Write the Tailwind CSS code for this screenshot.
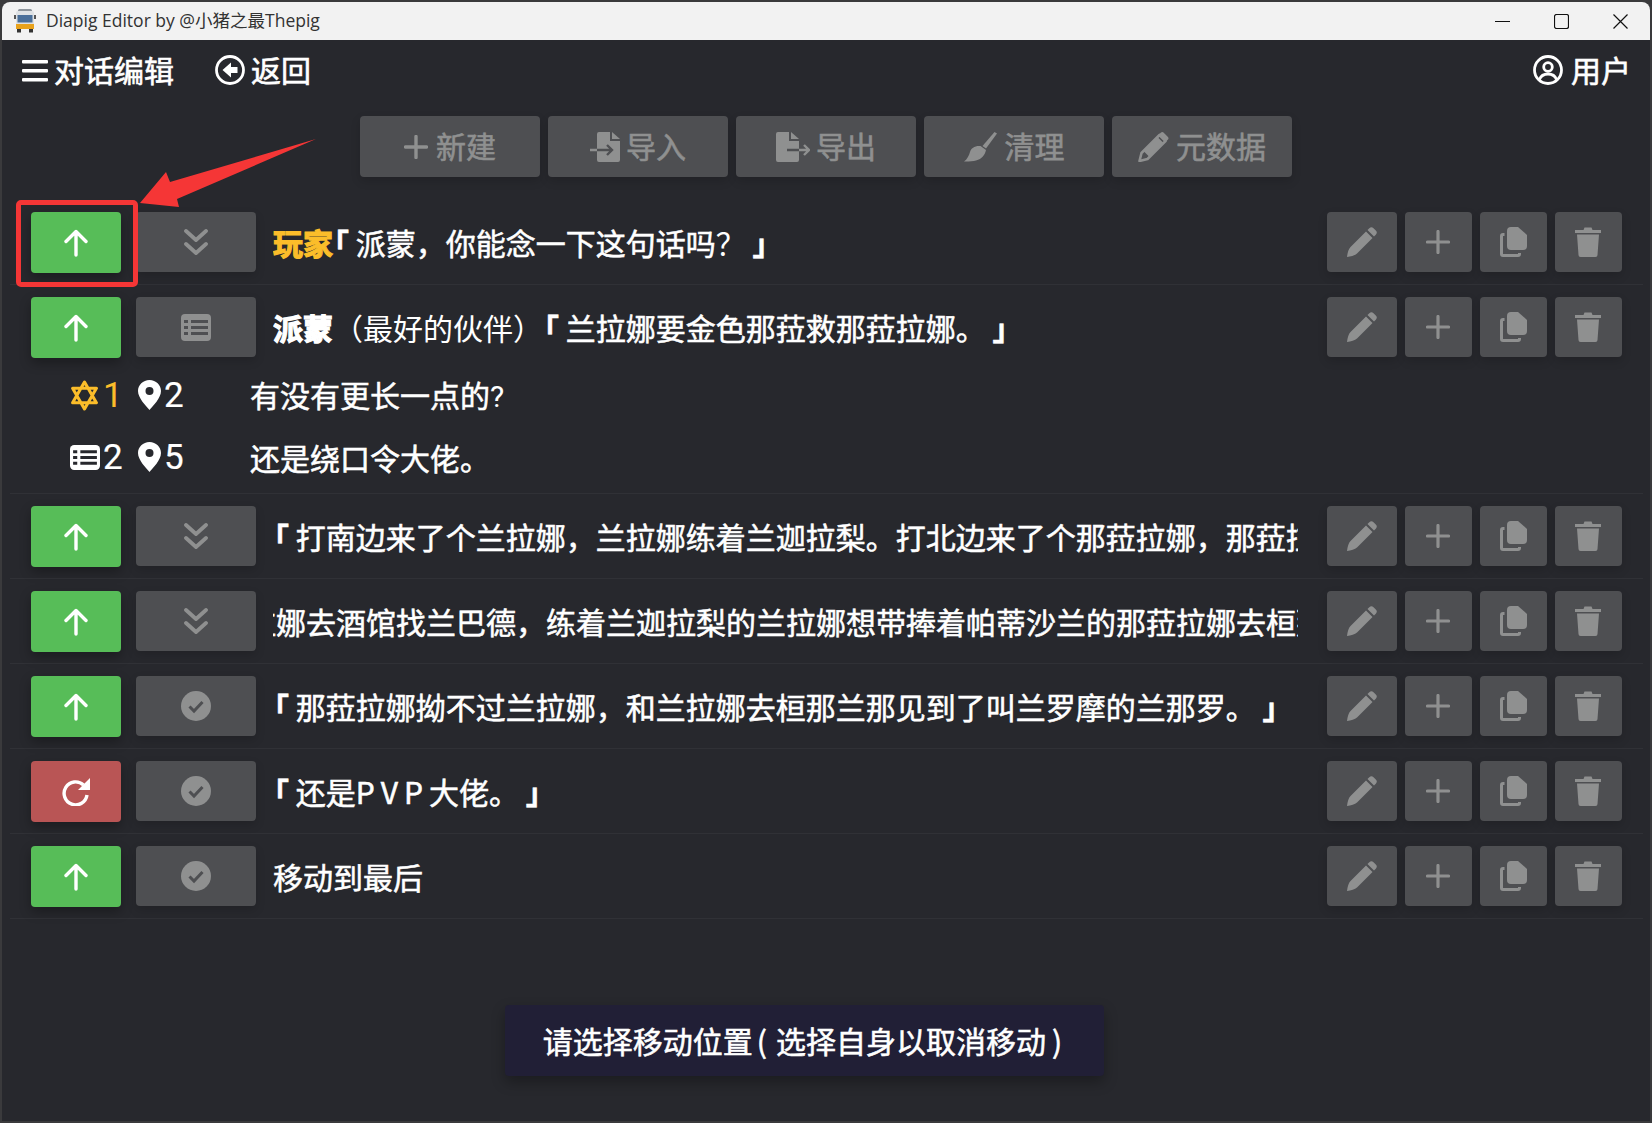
<!DOCTYPE html>
<html lang="zh-CN">
<head>
  <meta charset="UTF-8">
  <title>Diapig Editor</title>
  <script src="https://cdn.jsdelivr.net/npm/@tailwindcss/browser@4"></script>
</head>
<body class="bg-[#3a3a3c] h-[1123px] w-[1652px] overflow-hidden font-['Noto_Sans_CJK_SC','Noto_Sans',sans-serif]">
  <div class="relative ml-[2px] mt-[2px] w-[1648px] h-[1119px] bg-[#27282d] rounded-t-[8px] overflow-hidden text-white">

    <!-- Title bar -->
    <div class="h-[38px] bg-[#f2f2f2] flex items-center pl-[12px] text-[#333] font-['Open_Sans','Noto_Sans_CJK_SC',sans-serif] text-[17.5px]">
      <svg class="w-[22px] h-[24px]" viewBox="0 0 22 24">
        <rect x="4" y="0" width="14" height="3" rx="1.5" fill="#8d949b"/>
        <rect x="2" y="2" width="18" height="18" rx="2" fill="#dfe2e5"/>
        <rect x="3.500" y="6" width="15" height="7.500" fill="#4a6f9a"/>
        <rect x="2" y="15" width="18" height="5" fill="#e8a21c"/>
        <rect x="3" y="20" width="4" height="3.500" fill="#333"/>
        <rect x="15" y="20" width="4" height="3.500" fill="#333"/>
        <rect x="0" y="6" width="2" height="4" fill="#555"/>
        <rect x="20" y="6" width="2" height="4" fill="#555"/>
      </svg>
      <span class="ml-[10px] -mt-[2px]">Diapig Editor by @小猪之最Thepig</span>
      <div class="ml-auto flex items-center gap-[44px] pr-[22px]">
        <svg class="w-[15px] h-[15px]" viewBox="0 0 15 15"><path d="M0 7.500h15" stroke="#111" stroke-width="1"/></svg>
        <svg class="w-[15px] h-[15px]" viewBox="0 0 15 15"><rect x=".5" y=".5" width="14" height="14" rx="2" fill="none" stroke="#111" stroke-width="1.200"/></svg>
        <svg class="w-[15px] h-[15px]" viewBox="0 0 15 15"><path d="M.5.5l14 14M14.500.5l-14 14" stroke="#111" stroke-width="1.200"/></svg>
      </div>
    </div>

    <!-- Header -->
    <div class="h-[60px] flex items-center pl-[20px] pr-[19px] text-[30px] [-webkit-text-stroke-width:0.6px]">
      <svg class="w-[26px] h-[24px] mt-[1px]" viewBox="0 0 26 24" fill="#fff"><rect y="1" width="26" height="3.500" rx="1"/><rect y="10" width="26" height="3.500" rx="1"/><rect y="19" width="26" height="3.500" rx="1"/></svg>
      <span class="ml-[6px] -mt-[2px]">对话编辑</span>
      <svg class="ml-[41px] w-[30px] h-[30px]" viewBox="0 0 30 30"><circle cx="15" cy="15" r="13.500" fill="none" stroke="#fff" stroke-width="2.800"/><path d="M16 7.500v4.500h6.500v6H16v4.500L7.500 15z" fill="#fff"/></svg>
      <span class="ml-[6px] -mt-[2px]">返回</span>
      <svg class="ml-auto w-[30px] h-[30px]" viewBox="0 0 30 30" fill="none" stroke="#fff" stroke-width="2.800"><circle cx="15" cy="15" r="13.500"/><circle cx="15" cy="12" r="4.300"/><path d="M6.500 24.500c1.500-4 4.500-5.500 8.500-5.500s7 1.500 8.500 5.500"/></svg>
      <span class="ml-[8px] -mt-[2px]">用户</span>
    </div>

    <!-- Toolbar -->
    <div class="pl-[358px] pt-[16px] flex gap-[8px] text-[30px] text-[#8f9090] [-webkit-text-stroke-width:0.6px]">
      <button class="w-[180px] h-[61px] rounded-[4px] bg-[#4e4f52] shadow-[0_4px_10px_rgba(0,0,0,.15)] flex items-center justify-center gap-[8px]">
        <svg class="w-[24px] h-[24px]" viewBox="0 0 24 24"><path d="M12 1.500v21M1.500 12h21" stroke="#8f9090" stroke-width="3.400" stroke-linecap="round"/></svg>
        <span class="-mt-[2px]">新建</span>
      </button>
      <button class="w-[180px] h-[61px] rounded-[4px] bg-[#4e4f52] shadow-[0_4px_10px_rgba(0,0,0,.15)] flex items-center justify-center gap-[6px]">
        <svg class="w-[30px] h-[30px]" viewBox="0 0 30 30"><path d="M9 0h11v9h10v19a2 2 0 0 1-2 2H9a2 2 0 0 1-2-2V2a2 2 0 0 1 2-2z" fill="#8f9090"/><path d="M22 0l8 7h-8z" fill="#8f9090"/><path d="M0 18h7" stroke="#8f9090" stroke-width="2.400"/><path d="M7 18h15M17 13l5 5-5 5" stroke="#4e4f52" stroke-width="2.400" fill="none"/></svg>
        <span class="-mt-[2px]">导入</span>
      </button>
      <button class="w-[180px] h-[61px] rounded-[4px] bg-[#4e4f52] shadow-[0_4px_10px_rgba(0,0,0,.15)] flex items-center justify-center gap-[6px]">
        <svg class="w-[34px] h-[30px]" viewBox="0 0 34 30"><path d="M2 0h11v9h10v19a2 2 0 0 1-2 2H2a2 2 0 0 1-2-2V2a2 2 0 0 1 2-2z" fill="#8f9090"/><path d="M15 0l8 7h-8z" fill="#8f9090"/><path d="M11 18h12" stroke="#4e4f52" stroke-width="2.400"/><path d="M23 18h10M28 13l5 5-5 5" stroke="#8f9090" stroke-width="2.400" fill="none"/></svg>
        <span class="-mt-[2px]">导出</span>
      </button>
      <button class="w-[180px] h-[61px] rounded-[4px] bg-[#4e4f52] shadow-[0_4px_10px_rgba(0,0,0,.15)] flex items-center justify-center gap-[8px]">
        <svg class="w-[33px] h-[30px]" viewBox="0 0 33 30" fill="#8f9090"><path d="M30.500 0l2.500 1.500-11 15-3.500-2.500z"/><path d="M16.500 14l5.500 4c-1 5-4 9-10 10.500-3 .7-8 1.200-12 1 3-2 5-6 6-9.500 1-4 5-6.500 10.500-6z"/></svg>
        <span class="-mt-[2px]">清理</span>
      </button>
      <button class="w-[180px] h-[61px] rounded-[4px] bg-[#4e4f52] shadow-[0_4px_10px_rgba(0,0,0,.15)] flex items-center justify-center gap-[7px]">
        <svg class="w-[31px] h-[30px]" viewBox="0 0 30 30"><path d="M21 3l6 6L9 27l-8 2 2-8z" fill="none" stroke="#8f9090" stroke-width="2.600" stroke-linejoin="round"/><path d="M20.500 2.500l2-2a2 2 0 0 1 2.500 0l4.500 4.500a2 2 0 0 1 0 2.500l-2 2zM5 19L19 5l6 6L11 25z" fill="#8f9090"/></svg>
        <span class="-mt-[2px]">元数据</span>
      </button>
    </div>

    <!-- Rows, rendered below -->
    <div class="ml-[8px] mr-[7px] mt-[23px]" id="rows"></div>

    <!-- Toast -->
    <div class="absolute left-[503px] top-[1003px] w-[599px] h-[71px] pr-[4px] rounded-[4px] bg-[#211f36] shadow-[0_6px_14px_rgba(0,0,0,.3)] flex items-center justify-center text-[30px] [-webkit-text-stroke-width:0.55px] whitespace-nowrap">请选择移动位置<span class="ml-[4px] mr-[9px]">(</span>选择自身以取消移动<span class="ml-[6px]">)</span></div>

    <!-- Red annotation -->
    <div class="absolute left-[14px] top-[198px] w-[122px] h-[87px] border-[5px] border-[#f53636] rounded-[5px]"></div>
    <svg class="absolute left-[138px] top-[136px]" width="180" height="74" viewBox="0 0 180 74"><path d="M176 1 L30 44 L26 34 L0 65 L39 69 L37 61z" fill="#f53636"/></svg>
  </div>

  <script>
    const arrowUp = `<svg class="w-[24px] h-[28px]" viewBox="0 0 24 28" fill="none" stroke="#fff" stroke-width="3.400" stroke-linecap="round" stroke-linejoin="round"><path d="M12 26V3M2 12.500 12 2.500l10 10"/></svg>`;
    const redo = `<svg class="w-[28px] h-[28px]" viewBox="0 0 28 28"><path d="M21.500 7A11.500 11.500 0 1 0 25 17" fill="none" stroke="#fff" stroke-width="3.400"/><path d="M28 0v12H16z" fill="#fff"/></svg>`;
    const chevrons = `<svg class="w-[24px] h-[26px]" viewBox="0 0 24 26" fill="none" stroke="#8f9090" stroke-width="3.800" stroke-linecap="round" stroke-linejoin="round"><path d="M2 2l10 9 10-9M2 15l10 9 10-9"/></svg>`;
    const listIcon = `<svg class="w-[30px] h-[27px]" viewBox="0 0 30 27"><rect width="30" height="27" rx="4" fill="#8f9090"/><path d="M3 6h4v3H3zM3 12h4v3H3zM3 18h4v3H3zM10 6h17v3H10zM10 12h17v3H10zM10 18h17v3H10z" fill="#4e4f52"/></svg>`;
    const checkIcon = `<svg class="w-[30px] h-[30px]" viewBox="0 0 30 30"><circle cx="15" cy="15" r="15" fill="#8f9090"/><path d="M8.500 15.500l4.500 4.500 8.500-9" fill="none" stroke="#4e4f52" stroke-width="3"/></svg>`;
    const pin = `<svg class="w-[23px] h-[30px] ml-[1px]" viewBox="0 0 23 30"><path d="M11.500 0C5 0 0 5 0 11c0 7 8 15 11.500 19 3.500-4 11.500-12 11.500-19 0-6-5-11-11.500-11z" fill="#fff"/><circle cx="11.500" cy="11" r="4" fill="#27282d"/></svg>`;
    const star = `<svg class="w-[29px] h-[31px]" viewBox="0 0 28 30" fill="none" stroke="#fbbd2a" stroke-width="3" stroke-linejoin="round"><path d="M14 2l11.500 20h-23zM14 28L25.500 8h-23z"/></svg>`;
    const tableWhite = `<svg class="w-[30px] h-[25px]" viewBox="0 0 29 24"><rect width="29" height="24" rx="4" fill="#fff"/><path d="M3 5h4v3H3zM3 10.500h4v3H3zM3 16h4v3H3zM10 5h16v3H10zM10 10.500h16v3H10zM10 16h16v3H10z" fill="#27282d"/></svg>`;

    const btnGrey = "rounded-[4px] bg-[#4e4f52] shadow-[0_4px_10px_rgba(0,0,0,.15)] flex items-center justify-center";
    const actions = `
      <div class="flex gap-[8px] shrink-0 ml-[15px]">
        <button class="w-[70px] h-[60px] ${btnGrey}"><svg class="w-[30px] h-[30px]" viewBox="0 0 30 30" fill="#8f9090"><path d="M20.500 3l1.800-1.800a3 3 0 0 1 4.200 0l2.300 2.300a3 3 0 0 1 0 4.200L27 9.500zM19 4.500l6.500 6.500L10 26.500c-2 2-6 3-10 3.500.5-4 1.500-8 3.500-10z"/></svg></button>
        <button class="w-[67px] h-[60px] ${btnGrey}"><svg class="w-[24px] h-[24px] -ml-[1px]" viewBox="0 0 24 24"><path d="M12 1.500v21M1.500 12h21" stroke="#8f9090" stroke-width="3.200" stroke-linecap="round"/></svg></button>
        <button class="w-[67px] h-[60px] ${btnGrey}"><svg class="w-[27px] h-[30px]" viewBox="0 0 27 30"><path d="M4.500 7.500H3A1.500 1.500 0 0 0 1.500 9v18A1.500 1.500 0 0 0 3 28.500h15a1.500 1.500 0 0 0 1.500-1.500v-1" fill="none" stroke="#8f9090" stroke-width="3"/><path d="M7 4a4 4 0 0 1 4-4h7l9 8v11a4 4 0 0 1-4 4H11a4 4 0 0 1-4-4z" fill="#8f9090"/></svg></button>
        <button class="w-[67px] h-[60px] ${btnGrey}"><svg class="w-[26px] h-[30px] -ml-[1px]" viewBox="0 0 26 30" fill="#8f9090"><path d="M0 3h8.500l1-2.500h7l1 2.500H26v3H0z"/><path d="M2 7.500h22l-1.500 20.500a2 2 0 0 1-2 2h-15a2 2 0 0 1-2-2z"/></svg></button>
      </div>`;

    // left bracket glyph sits in the right half of its em box, pull it back
    const L = `<span class="inline-block -ml-[14px] font-bold">「</span> `;
    const R = ` <span class="font-bold">」</span>`;
    const thin = "[-webkit-text-stroke-width:0] font-normal";

    const rows = [
      { icon: chevrons, text: `<span class="font-bold text-[#fbbd2a] [-webkit-text-stroke-width:1.200px]">玩家</span>${L}派蒙，你能念一下这句话吗<span class="${thin}">？</span>${R}` },
      { icon: listIcon, text: `<span class="font-bold [-webkit-text-stroke-width:1.200px]">派蒙</span><span class="${thin}">（最好的伙伴）</span>${L}兰拉娜要金色那菈救那菈拉娜。${R}`, subs: true },
      { icon: chevrons, text: `${L}打南边来了个兰拉娜，兰拉娜练着兰迦拉梨。打北边来了个那菈拉娜，那菈拉娜捧着帕蒂沙兰。` },
      { icon: chevrons, text: `<span class="inline-block -ml-[27px]">拉娜去酒馆找兰巴德，练着兰迦拉梨的兰拉娜想带捧着帕蒂沙兰的那菈拉娜去桓那兰那。</span>` },
      { icon: checkIcon, text: `${L}那菈拉娜拗不过兰拉娜，和兰拉娜去桓那兰那见到了叫兰罗摩的兰那罗。${R}` },
      { icon: checkIcon, text: `${L}还是<span class="tracking-[6px]">PVP</span>大佬。${R}`, red: true },
      { icon: checkIcon, text: `移动到最后` },
    ];

    const subRows = `
      <div class="-mb-[6px] mt-[6px] text-[30px]">
        <div class="h-[62px] flex items-center pl-[60px]">
          <div class="w-[67px] flex items-center text-[35px] text-[#fbbd2a] font-['Roboto'] [-webkit-text-stroke-width:0]">${star}<span class="ml-[4px] mt-[3px]">1</span></div>
          <div class="w-[113px] flex items-center text-[35px] font-['Roboto'] [-webkit-text-stroke-width:0.2px]">${pin}<span class="ml-[3px] mt-[3px]">2</span></div>
          <div>有没有更长一点的<span class="font-['Roboto'] ${thin}">?</span></div>
        </div>
        <div class="h-[62px] flex items-center pl-[60px]">
          <div class="w-[67px] flex items-center text-[35px] font-['Roboto'] [-webkit-text-stroke-width:0.2px]">${tableWhite}<span class="ml-[3px] mt-[3px]">2</span></div>
          <div class="w-[113px] flex items-center text-[35px] font-['Roboto'] [-webkit-text-stroke-width:0.2px]">${pin}<span class="ml-[3px] mt-[3px]">5</span></div>
          <div>还是绕口令大佬。</div>
        </div>
      </div>`;

    document.getElementById("rows").innerHTML = rows.map(r => `
      <div class="border-b border-[#303136] pt-[12px] pb-[11px] [-webkit-text-stroke-width:0.55px]">
        <div class="flex items-start pl-[21px] pr-[21px]">
          <button class="w-[90px] h-[61px] shrink-0 rounded-[4px] ${r.red ? "bg-[#b95555]" : "bg-[#57bd58]"} shadow-[0_5px_12px_rgba(0,0,0,.3)] flex items-center justify-center">${r.red ? redo : arrowUp}</button>
          <button class="w-[120px] h-[60px] shrink-0 ml-[15px] ${btnGrey}">${r.icon}</button>
          <div class="flex-1 min-w-0 ml-[17px] mr-[14px] overflow-hidden whitespace-nowrap text-[30px] leading-[61px]">${r.text}</div>
          ${actions}
        </div>
        ${r.subs ? subRows : ""}
      </div>`).join("");
  </script>
</body>
</html>
